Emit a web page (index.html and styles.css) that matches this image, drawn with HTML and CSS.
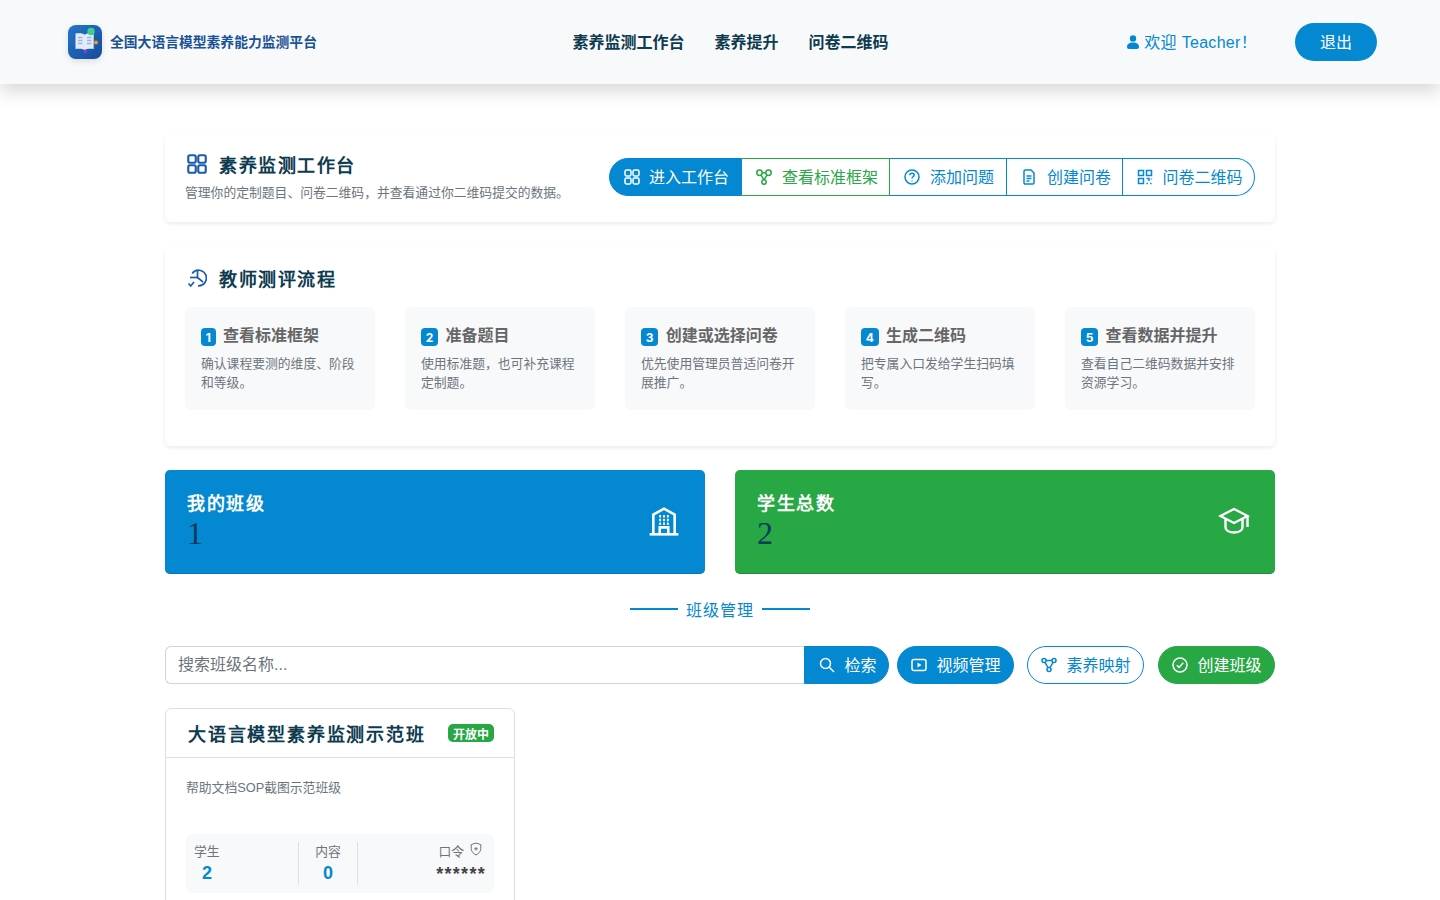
FILE: index.html
```html
<!DOCTYPE html>
<html lang="zh-CN">
<head>
    <meta charset="UTF-8">
    <meta name="viewport" content="width=device-width, initial-scale=1.0">
    <title>全国大语言模型素养能力监测平台</title>
    <link rel="stylesheet" href="styles.css">
</head>
<body>
    <svg class="sprite" aria-hidden="true">
        <symbol id="i-grid" viewBox="0 0 16 16">
            <rect x="1" y="1" width="6" height="6" rx="1.4"/><rect x="9" y="1" width="6" height="6" rx="1.4"/>
            <rect x="1" y="9" width="6" height="6" rx="1.4"/><rect x="9" y="9" width="6" height="6" rx="1.4"/>
        </symbol>
        <symbol id="i-tree" viewBox="0 0 16 16">
            <circle cx="3.5" cy="3.8" r="2.7"/><circle cx="12.5" cy="3.8" r="2.7"/><circle cx="8" cy="13" r="2.2"/>
            <path d="M6.2 3.800h3.600M5 6.200 8 10.800M11 6.200 8 10.800"/>
        </symbol>
        <symbol id="i-question" viewBox="0 0 16 16">
            <circle cx="8" cy="8" r="7"/><path d="M5.8 6.2C5.8 4.9 6.8 4.2 8 4.2s2.2.8 2.2 1.9c0 1.6-2.2 1.7-2.2 3.3"/><path d="M8 11.4v.8"/>
        </symbol>
        <symbol id="i-doc" viewBox="0 0 16 16">
            <path d="M3 2.2C3 1.5 3.5 1 4.2 1H10l3 3v9.8c0 .7-.5 1.2-1.2 1.2H4.200c-.7 0-1.200-.5-1.200-1.200z"/><path d="M5.500 7h5M5.500 9.500h5M5.500 12h3"/>
        </symbol>
        <symbol id="i-qr" viewBox="0 0 16 16">
            <rect x="1.500" y="1.500" width="5" height="5"/><rect x="9.500" y="1.500" width="5" height="5"/><rect x="1.500" y="9.500" width="5" height="5"/>
            <path d="M9.500 9.500h2.500v2.500M14.500 9.500v1M9.500 14.500h1.500M13 14.500h1.500"/>
        </symbol>
        <symbol id="i-flow" viewBox="0 0 20 20">
            <path d="M5.200 5.500A7.800 7.800 0 1 1 11 17.800"/><path d="M10.500 2v7.500l5.600 4.700"/><path d="M10.500 9.500H3"/><path d="M1.500 15.500l2.200 2.500 3.300-4"/>
        </symbol>
        <symbol id="i-building" viewBox="0 0 30 30">
            <path d="M5 27V9l10-5.500L25 9v18"/><path d="M1.500 27.500h27"/><path d="M11 27v-6h8v6"/>
            <path d="M10.500 10.500h1.800M14.100 10.500h1.800M17.700 10.500h1.800M10.500 14h1.800M14.100 14h1.800M17.700 14h1.800M10.500 17.500h1.800M14.100 17.500h1.800M17.700 17.500h1.800"/>
        </symbol>
        <symbol id="i-cap" viewBox="0 0 32 32">
            <path d="M16 4 2.500 11 16 18l13.500-7z"/><path d="M7.500 14v8c0 3.500 4 5.500 8.500 5.500s8.500-2 8.500-5.500v-8"/><path d="M29.500 11v11"/>
        </symbol>
        <symbol id="i-search" viewBox="0 0 16 16">
            <circle cx="6.500" cy="6.500" r="5"/><path d="M10.300 10.300 15 15"/>
        </symbol>
        <symbol id="i-video" viewBox="0 0 16 16">
            <rect x="1" y="2.500" width="14" height="11" rx="2"/><path class="solid" d="M6.500 5.500v5l4-2.500z"/>
        </symbol>
        <symbol id="i-map" viewBox="0 0 16 16">
            <circle cx="3" cy="3.500" r="2"/><circle cx="13" cy="3.500" r="2"/><circle cx="8" cy="12.500" r="2"/>
            <path d="M5 3.500h6M4 5.300l3 5.400M12 5.300l-3 5.400"/>
        </symbol>
        <symbol id="i-check" viewBox="0 0 16 16">
            <circle cx="8" cy="8" r="7"/><path d="M4.800 8.200 7 10.400l4.300-4.600"/>
        </symbol>
        <symbol id="i-shield" viewBox="0 0 12 14">
            <path d="M6 1 1.200 2.600v4c0 3 2.200 5 4.800 6.400 2.600-1.400 4.800-3.400 4.800-6.400v-4z"/><path d="M6 5v3.600M4.200 6.800h3.600"/>
        </symbol>
    </svg>

    <header class="topbar">
        <a class="brand" href="#">
            <svg class="brand-logo" viewBox="0 0 34 34">
                <defs>
                    <linearGradient id="logoBg" x1="0" y1="0" x2="1" y2="1">
                        <stop offset="0" stop-color="#2376c9"/>
                        <stop offset="1" stop-color="#174a9c"/>
                    </linearGradient>
                </defs>
                <rect width="34" height="34" rx="8" fill="url(#logoBg)"/>
                <path d="M7.500 8.500c3.500-.5 7-.3 9.200 1.200 2.200-1.500 5.600-1.700 9-1.200v15.500c-3.400-.5-6.800-.3-9 1.200-2.200-1.500-5.700-1.700-9.200-1.200z" fill="#e3ebf7"/>
                <path d="M10 12.500h4.500M10 15.500h4.500M10 18.500h4.500M19 12.500h4.500M19 15.500h4.500M19 18.500h4.500" stroke="#9fb6dc" stroke-width="1.300"/>
                <circle cx="23" cy="6.500" r="3.700" fill="#3fcf8e"/>
                <circle cx="28" cy="17.500" r="2" fill="#f59e0b"/>
                <circle cx="17.500" cy="26.500" r="2" fill="#7c3aed"/>
            </svg>
            <span class="brand-name">全国大语言模型素养能力监测平台</span>
        </a>
        <nav class="topnav">
            <a href="#">素养监测工作台</a>
            <a href="#">素养提升</a>
            <a href="#">问卷二维码</a>
        </nav>
        <div class="userbox">
            <span class="welcome">
                <svg class="person" viewBox="0 0 12 14"><circle cx="6" cy="3.500" r="3.200"/><path d="M0 12c0-3 2.200-4.500 6-4.500s6 1.500 6 4.500c0 1.300-.7 2-2 2H2c-1.300 0-2-.7-2-2z"/></svg>
                <span>欢迎 Teacher<span class="bang">！</span></span>
            </span>
            <a class="logout" href="#">退出</a>
        </div>
    </header>

    <main class="page">
        <section class="card card-workbench">
            <div class="workbench-text">
                <h2 class="card-title"><svg class="ico title-ico"><use href="#i-grid"/></svg>素养监测工作台</h2>
                <p class="card-sub">管理你的定制题目、问卷二维码，并查看通过你二维码提交的数据。</p>
            </div>
            <div class="seg">
                <a class="seg-item active" href="#"><svg class="ico"><use href="#i-grid"/></svg>进入工作台</a>
                <a class="seg-item green" href="#"><svg class="ico"><use href="#i-tree"/></svg>查看标准框架</a>
                <a class="seg-item" href="#"><svg class="ico"><use href="#i-question"/></svg>添加问题</a>
                <a class="seg-item" href="#"><svg class="ico"><use href="#i-doc"/></svg>创建问卷</a>
                <a class="seg-item last" href="#"><svg class="ico"><use href="#i-qr"/></svg>问卷二维码</a>
            </div>
        </section>

        <section class="card card-flow">
            <h2 class="card-title"><svg class="ico title-ico"><use href="#i-flow"/></svg>教师测评流程</h2>
            <div class="steps">
                <div class="step">
                    <h3><span class="step-no">1</span>查看标准框架</h3>
                    <p>确认课程要测的维度、阶段和等级。</p>
                </div>
                <div class="step">
                    <h3><span class="step-no">2</span>准备题目</h3>
                    <p>使用标准题，也可补充课程定制题。</p>
                </div>
                <div class="step">
                    <h3><span class="step-no">3</span>创建或选择问卷</h3>
                    <p>优先使用管理员普适问卷开展推广。</p>
                </div>
                <div class="step">
                    <h3><span class="step-no">4</span>生成二维码</h3>
                    <p>把专属入口发给学生扫码填写。</p>
                </div>
                <div class="step">
                    <h3><span class="step-no">5</span>查看数据并提升</h3>
                    <p>查看自己二维码数据并安排资源学习。</p>
                </div>
            </div>
        </section>

        <section class="stats">
            <div class="stat stat-blue">
                <div>
                    <h4>我的班级</h4>
                    <div class="stat-num">1</div>
                </div>
                <svg class="ico stat-ico"><use href="#i-building"/></svg>
            </div>
            <div class="stat stat-green">
                <div>
                    <h4>学生总数</h4>
                    <div class="stat-num">2</div>
                </div>
                <svg class="ico stat-ico"><use href="#i-cap"/></svg>
            </div>
        </section>

        <h3 class="section-head">班级管理</h3>

        <div class="toolbar">
            <form class="search">
                <input type="text" placeholder="搜索班级名称...">
                <button type="button" class="pill search-btn"><svg class="ico"><use href="#i-search"/></svg>检索</button>
            </form>
            <a class="pill" href="#"><svg class="ico"><use href="#i-video"/></svg>视频管理</a>
            <a class="pill pill-outline" href="#"><svg class="ico"><use href="#i-map"/></svg>素养映射</a>
            <a class="pill pill-green" href="#"><svg class="ico"><use href="#i-check"/></svg>创建班级</a>
        </div>

        <article class="class-card">
            <div class="class-head">
                <h5>大语言模型素养监测示范班</h5>
                <span class="badge">开放中</span>
            </div>
            <div class="class-body">
                <p class="class-desc">帮助文档SOP截图示范班级</p>
                <div class="class-meta">
                    <div class="meta-col meta-students">
                        <span class="meta-label">学生</span>
                        <span class="meta-val">2</span>
                    </div>
                    <div class="meta-col meta-content">
                        <span class="meta-label">内容</span>
                        <span class="meta-val">0</span>
                    </div>
                    <div class="meta-col meta-code">
                        <span class="meta-label">口令<svg class="ico shield"><use href="#i-shield"/></svg></span>
                        <span class="meta-secret">******</span>
                    </div>
                </div>
            </div>
        </article>
    </main>
</body>
</html>
```

FILE: styles.css
```css
* {
    box-sizing: border-box;
}
body {
    margin: 0;
    background: #fff;
    font-family: "Liberation Sans", "Noto Sans CJK SC", sans-serif;
    font-size: 16px;
    color: #212529;
    text-spacing-trim: space-all;
}
a {
    text-decoration: none;
    color: inherit;
}
h2, h3, h4, h5, p {
    margin: 0;
}
.sprite {
    display: none;
}
.ico {
    width: 16px;
    height: 16px;
    flex: none;
    fill: none;
    stroke: currentColor;
    stroke-width: 1.5;
}
.solid {
    fill: currentColor;
    stroke: none;
}

/* top bar */
.topbar {
    height: 84px;
    padding: 0 63px 0 68px;
    display: grid;
    grid-template-columns: 1fr auto 1fr;
    align-items: center;
    background: #f8f9fa;
    box-shadow: 0 8px 16px rgba(0,0,0,0.15);
}
.brand {
    display: flex;
    align-items: center;
    gap: 8px;
}
.brand-logo {
    width: 34px;
    height: 34px;
    filter: drop-shadow(0 2px 3px rgba(0,0,0,0.12));
}
.brand-name {
    padding-bottom: 2px;
    font-size: 13.8px;
    font-weight: 700;
    color: #1a5296;
}
.topnav {
    display: flex;
    gap: 30px;
    margin: 0 0 2px 16px;
    font-weight: 700;
    color: #0d3b4f;
}
.userbox {
    display: flex;
    justify-content: flex-end;
    align-items: center;
    gap: 38px;
}
.welcome {
    display: flex;
    align-items: center;
    gap: 5px;
    padding-bottom: 2px;
    letter-spacing: 0.3px;
    color: #0488d1;
}
.bang {
    font-family: "Noto Sans CJK TC", sans-serif;
}
.person {
    width: 12px;
    height: 14px;
    margin-top: 2px;
    fill: currentColor;
}
.logout {
    width: 82px;
    height: 38px;
    padding-bottom: 2px;
    border-radius: 19px;
    background: #0488d1;
    color: #fff;
    display: flex;
    align-items: center;
    justify-content: center;
}

/* page */
.page {
    width: 1110px;
    margin: 50px auto 0;
}
.card {
    background: #fff;
    border-radius: 6px;
    padding: 20px;
    box-shadow: 0 2px 4px rgba(0,0,0,0.08);
}
.card-workbench {
    height: 88px;
    display: flex;
    justify-content: space-between;
    align-items: center;
}
.workbench-text {
    padding-bottom: 3px;
}
.card-title {
    display: flex;
    align-items: center;
    height: 22px;
    font-family: "Liberation Serif", serif;
    font-size: 18px;
    font-weight: 700;
    letter-spacing: 1.5px;
    color: #0d3b4f;
}
.title-ico {
    width: 20px;
    height: 20px;
    margin: 0 12px 0 2px;
    stroke-width: 1.7;
    color: #1a5caa;
}
.card-sub {
    margin-top: 7px;
    font-size: 12.8px;
    color: #6c757d;
}
.seg {
    display: grid;
    grid-template-columns: 133px 148px 117px 116px 132px;
    height: 38px;
    margin-bottom: 2px;
}
.seg-item {
    display: flex;
    align-items: center;
    gap: 10px;
    padding: 0 0 2px 14px;
    border: 1px solid #0488d1;
    border-left-width: 0;
    color: #0488d1;
}
.seg-item.active {
    background: #0488d1;
    color: #fff;
    border-left-width: 1px;
    border-radius: 19px 0 0 19px;
    gap: 9px;
}
.seg-item.green {
    color: #28a745;
    border-color: #28a745;
}
.seg-item.last {
    padding-left: 13.500px;
    border-radius: 0 19px 19px 0;
}
.seg-item .ico {
    margin-top: 2px;
}
.card-flow {
    height: 199px;
    margin-top: 25px;
}
.steps {
    display: grid;
    grid-template-columns: repeat(5, 190px);
    gap: 30px;
    margin-top: 18px;
}
.step {
    height: 103px;
    padding: 16px;
    background: #f8f9fa;
    border-radius: 6px;
}
.step h3 {
    display: flex;
    align-items: center;
    gap: 7.5px;
    height: 24px;
    padding-bottom: 2px;
    font-size: 16px;
    color: #666;
}
.step-no {
    height: 18px;
    margin-top: 6px;
    padding: 0 4.700px;
    border-radius: 4px;
    background: #0488d1;
    color: #fff;
    font-family: Inter, sans-serif;
    font-size: 12px;
    display: flex;
    align-items: center;
    justify-content: center;
}
.step p {
    margin-top: 7px;
    font-size: 12.8px;
    line-height: 19px;
    color: #6c757d;
}

/* stat boxes */
.stats {
    display: grid;
    grid-template-columns: 1fr 1fr;
    gap: 30px;
    margin-top: 24px;
}
.stat {
    height: 104px;
    padding: 23px 25px 0 22px;
    border-radius: 5px;
    display: flex;
    justify-content: space-between;
    align-items: flex-start;
    color: #fff;
}
.stat h4 {
    font-family: "Liberation Serif", serif;
    font-size: 18px;
    font-weight: 700;
    letter-spacing: 1.5px;
    line-height: 22px;
}
.stat-num {
    font-family: "Liberation Serif", serif;
    font-size: 32px;
    line-height: 36px;
    color: #0d3b5c;
}
.stat-blue {
    background: #0488d1;
    border-bottom: 1px solid #0377b8;
}
.stat-green {
    background: #28a745;
    border-bottom: 1px solid #218c3a;
}
.stat-ico {
    width: 32px;
    height: 32px;
    margin-top: 12px;
    stroke-width: 2.4;
}

.section-head {
    margin-top: 25px;
    display: flex;
    justify-content: center;
    align-items: center;
    gap: 8px;
    height: 20px;
    font-size: 16px;
    font-weight: 400;
    letter-spacing: 1px;
    color: #0488d1;
}
.section-head::before,
.section-head::after {
    content: "";
    width: 48px;
    height: 2px;
    background: #0488d1;
}

/* toolbar */
.toolbar {
    display: flex;
    gap: 13px;
    height: 38px;
    margin-top: 27px;
}
.search {
    flex: 1;
    display: flex;
    margin: 0 -5px 0 0;
}
.search input {
    flex: 1;
    min-width: 0;
    height: 38px;
    padding: 0 12px;
    border: 1px solid #ced4da;
    border-right: none;
    border-radius: 6px 0 0 6px;
    font: inherit;
    outline: none;
}
.search input::placeholder {
    color: #6c757d;
}
.pill {
    height: 38px;
    width: 117px;
    padding: 0 0 2px 1px;
    border: 1px solid #0488d1;
    border-radius: 19px;
    background: #0488d1;
    color: #fff;
    font: inherit;
    display: flex;
    align-items: center;
    justify-content: center;
    gap: 9px;
}
.pill .ico {
    margin-top: 2px;
}
.search-btn {
    width: 85px;
    border-radius: 0 19px 19px 0;
    padding: 0 0 2px 3px;
}
.pill-outline {
    background: #fff;
    color: #0488d1;
}
.pill-green {
    margin-left: 1px;
    background: #28a745;
    border-color: #28a745;
}

/* class card */
.class-card {
    width: 350px;
    margin-top: 24px;
    border: 1px solid #dcdfe2;
    border-radius: 6px;
    background: #fff;
}
.class-head {
    height: 49px;
    padding: 0 20px 0 22px;
    display: flex;
    justify-content: space-between;
    align-items: center;
    border-bottom: 1px solid #dcdfe2;
}
.class-head h5 {
    font-family: "Liberation Serif", serif;
    font-size: 18px;
    font-weight: 700;
    letter-spacing: 1.8px;
    color: #0d3b4f;
}
.badge {
    width: 46px;
    height: 18px;
    border-radius: 5px;
    background: #28a745;
    color: #fff;
    font-size: 12px;
    font-weight: 700;
    display: flex;
    align-items: center;
    justify-content: center;
}
.class-body {
    padding: 20px;
}
.class-desc {
    height: 56px;
    font-size: 12.8px;
    line-height: 19px;
    color: #6c757d;
}
.class-meta {
    height: 59px;
    padding: 8px;
    display: flex;
    border-radius: 6px;
    background: #f8f9fa;
}
.meta-col {
    display: flex;
    flex-direction: column;
    align-items: center;
}
.meta-students {
    width: 105px;
    align-items: flex-start;
    border-right: 1px solid #dee2e6;
}
.meta-students .meta-val {
    margin-left: 8px;
}
.meta-content {
    width: 59px;
    border-right: 1px solid #dee2e6;
}
.meta-code {
    flex: 1;
    align-items: flex-end;
}
.meta-label {
    display: flex;
    gap: 6px;
    height: 16px;
    margin-bottom: 3px;
    align-items: center;
    font-size: 12.8px;
    color: #6c757d;
}
.meta-val {
    font-size: 18px;
    line-height: 24px;
    font-weight: 700;
    color: #0488d1;
}
.meta-secret {
    margin-top: 2px;
    font-size: 18px;
    line-height: 22px;
    letter-spacing: 1.3px;
    font-weight: 700;
    color: #444;
}
.shield {
    width: 12px;
    height: 14px;
    margin: -2px 4px 0 0;
    stroke-width: 1;
}
```
